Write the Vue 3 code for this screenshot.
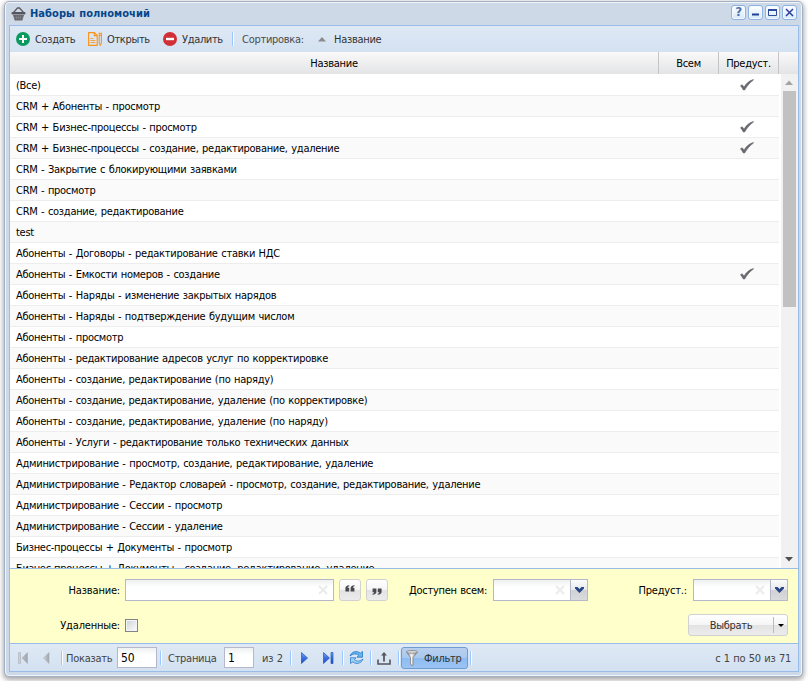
<script setup>
const rows = [
  ['(Все)', true],
  ['CRM + Абоненты - просмотр', false],
  ['CRM + Бизнес-процессы - просмотр', true],
  ['CRM + Бизнес-процессы - создание, редактирование, удаление', true],
  ['CRM - Закрытие с блокирующими заявками', false],
  ['CRM - просмотр', false],
  ['CRM - создание, редактирование', false],
  ['test', false],
  ['Абоненты - Договоры - редактирование ставки НДС', false],
  ['Абоненты - Емкости номеров - создание', true],
  ['Абоненты - Наряды - изменение закрытых нарядов', false],
  ['Абоненты - Наряды - подтверждение будущим числом', false],
  ['Абоненты - просмотр', false],
  ['Абоненты - редактирование адресов услуг по корректировке', false],
  ['Абоненты - создание, редактирование (по наряду)', false],
  ['Абоненты - создание, редактирование, удаление (по корректировке)', false],
  ['Абоненты - создание, редактирование, удаление (по наряду)', false],
  ['Абоненты - Услуги - редактирование только технических данных', false],
  ['Администрирование - просмотр, создание, редактирование, удаление', false],
  ['Администрирование - Редактор словарей - просмотр, создание, редактирование, удаление', false],
  ['Администрирование - Сессии - просмотр', false],
  ['Администрирование - Сессии - удаление', false],
  ['Бизнес-процессы + Документы - просмотр', false],
  ['Бизнес-процессы + Документы - создание, редактирование, удаление', false],
]
</script>

<template>
  <div class="page">
    <div class="window">
      <header class="title">
        <svg class="basket" width="15" height="14" viewBox="0 0 15 14">
          <path d="M2.500 5.500 6.500 1h2L12.500 5.500" fill="none" stroke="#5c5c62" stroke-width="1.300" />
          <rect x=".5" y="5" width="14" height="2.400" rx="1" fill="#55555b" />
          <path d="M2 8h11l-1.700 5.500H3.700z" fill="#66666c" />
          <path d="M5.500 8.500v4M7.500 8.500v4M9.500 8.500v4M3.400 10.500h8.200" stroke="#85858d" stroke-width=".6" />
        </svg>
        <h1>Наборы полномочий</h1>
        <div class="tools">
          <span class="tool q">?</span>
          <span class="tool"><svg width="13" height="13"><path d="M3 8.500h7" stroke="#1f4193" stroke-width="2" /></svg></span>
          <span class="tool"><svg width="13" height="13"><path d="M2.500 3v6.500h8V3" fill="none" stroke="#2b4c9b" /><path d="M2 4h9" stroke="#2b4c9b" stroke-width="2" /></svg></span>
          <span class="tool"><svg width="13" height="13"><path d="m3 3 7 7M10 3l-7 7" stroke="#2b3f98" stroke-width="1.500" /></svg></span>
        </div>
      </header>

      <main class="body">
        <div class="topbar">
          <div class="act a1">
            <svg width="14" height="14"><circle cx="7" cy="7" r="7" fill="#0a9a5e" /><path d="M3 7h8M7 3v8" stroke="#fff" stroke-width="2" /></svg>
            <span>Создать</span>
          </div>
          <div class="act a2">
            <svg width="14" height="14" fill="none" stroke="#f7941d" stroke-width="1.100">
              <path d="M.6.6h5.800l2.800 2.800v10H.6zM6.300.8v2.800h2.700" /><path d="M2.400 6.500h3M2.400 8.500h5M2.400 10.500h5" stroke-width=".8" /><path d="M11.200 1.200h2.200v10l-1.100 2-1.100-2zM11.200 3.200h2.200" />
            </svg>
            <span>Открыть</span>
          </div>
          <div class="act a3">
            <svg width="14" height="14"><circle cx="7" cy="7" r="7" fill="#d03035" /><path d="M3 7h8" stroke="#fff" stroke-width="2.400" /></svg>
            <span>Удалить</span>
          </div>
          <i class="sep"></i>
          <span class="sortlabel">Сортировка:</span>
          <svg class="sortarrow" width="8" height="5"><path d="M0 4.500 4 0l4 4.500z" fill="#8b8b8b" /></svg>
          <span class="sortname">Название</span>
        </div>

        <div class="heads">
          <span>Название</span><span>Всем</span><span>Предуст.</span><span></span>
        </div>

        <div class="grid">
          <div class="rows">
            <div v-for="(r, i) in rows" :key="i" class="row" :class="{ alt: i % 2 }">
              <span class="name">{{ r[0] }}</span>
              <span class="check">
                <svg v-if="r[1]" width="14" height="12"><path d="M.5 6.700 2 5.800c.9.5 1.500 1.300 2 2.400C6 4.700 9.300 1.600 13.300.6L13.500 1C9.800 3.600 7 7 4.700 11H3.300C2.400 9.300 1.500 7.800.5 6.700z" fill="#68686f" stroke="#68686f" stroke-width=".6" /></svg>
              </span>
            </div>
          </div>
          <div class="scroll">
            <svg width="16" height="16"><path d="M4 11 8 6.500l4 4.500z" fill="#a3a3a3" /></svg>
            <div class="thumb"></div>
            <svg width="16" height="16"><path d="m4 5 4 4.500L12 5z" fill="#505050" /></svg>
          </div>
        </div>

        <section class="filter">
          <div class="line">
            <label class="l1">Название:</label>
            <div class="field f1"><svg class="clear" width="10" height="10"><path d="m1 1 8 8M9 1 1 9" /></svg></div>
            <button class="quote b1"><svg width="10" height="7"><path d="M4.300.2v1C3.200 1.500 2.700 2 2.700 2.800h1.500V6.500H.4V3.200C.4 1.500 1.700.4 4.300.2zM9.500.2v1C8.400 1.500 7.900 2 7.900 2.800h1.500V6.500H5.600V3.200C5.600 1.500 6.900.4 9.500.2z" fill="#484850" /></svg></button>
            <button class="quote b2"><svg width="10" height="7"><path d="M.5 6.800v-1C1.600 5.500 2.100 5 2.100 4.200H.6V.5h3.800v3.300C4.400 5.500 3.100 6.600.5 6.800zM5.700 6.800v-1C6.800 5.500 7.300 5 7.300 4.200H5.800V.5h3.800v3.300C9.600 5.500 8.300 6.600 5.700 6.800z" fill="#484850" /></svg></button>
            <label class="l2">Доступен всем:</label>
            <div class="field combo"><svg class="clear" width="10" height="10"><path d="m1 1 8 8M9 1 1 9" /></svg><span class="trigger"><svg width="9" height="6"><path d="M0 0h2.500l2 2L6.500 0H9v1.500L4.500 6 0 1.500z" fill="#2b4687" /></svg></span></div>
            <label class="l3">Предуст.:</label>
            <div class="field combo"><svg class="clear" width="10" height="10"><path d="m1 1 8 8M9 1 1 9" /></svg><span class="trigger"><svg width="9" height="6"><path d="M0 0h2.500l2 2L6.500 0H9v1.500L4.500 6 0 1.500z" fill="#2b4687" /></svg></span></div>
          </div>
          <div class="line second">
            <label class="l1">Удаленные:</label>
            <span class="box"></span>
            <button class="choose"><span>Выбрать</span><i><svg width="6" height="3"><path d="M0 0h6L3 3z" fill="#000" /></svg></i></button>
          </div>
        </section>

        <footer class="pager">
          <svg class="first" width="11" height="12"><defs><linearGradient id="gr"><stop stop-color="#d2d6dc" /><stop offset="1" stop-color="#9da3ab" /></linearGradient><linearGradient id="bl" x2="0" y2="1"><stop stop-color="#76a4f5" /><stop offset=".5" stop-color="#3b6fe0" /><stop offset="1" stop-color="#1c4cbd" /></linearGradient></defs><path d="M.5.5h2v11h-2zM9.500.5v11L4 6z" fill="url(#gr)" stroke="#a9afb8" stroke-width=".6" /></svg>
          <svg class="prev" width="7" height="12"><path d="M6 .5v11L.5 6z" fill="url(#gr)" stroke="#a9afb8" stroke-width=".6" /></svg>
          <i class="sep s1"></i>
          <span class="t show">Показать</span>
          <div class="num n1">50</div>
          <i class="sep s2"></i>
          <span class="t pg">Страница</span>
          <div class="num n2">1</div>
          <span class="t of">из 2</span>
          <i class="sep s3"></i>
          <svg class="next" width="7" height="12"><path d="M.5.5v11L6.500 6z" fill="url(#bl)" stroke="#2454bd" stroke-width=".7" /></svg>
          <svg class="last" width="11" height="12"><path d="M.5.5v11L6.500 6zM8 .5h2v11H8z" fill="url(#bl)" stroke="#2454bd" stroke-width=".7" /></svg>
          <i class="sep s4"></i>
          <svg class="refresh" width="15" height="15" viewBox="0 0 15 15">
            <path d="M1 6C2.500 1.500 8 .2 11.200 3.200L13.500 1.500v5.700H8L9.600 5.300C7 3.300 4.500 3.500 1 6z" fill="#63b5ef" stroke="#2878c8" stroke-width=".8" />
            <path d="M14 9C12.500 13.500 7 14.800 3.800 11.800L1.500 13.500V7.800H7L5.400 9.700C8 11.700 10.500 11.500 14 9z" fill="#9bd3f7" stroke="#2878c8" stroke-width=".8" />
          </svg>
          <i class="sep s5"></i>
          <svg class="up" width="14" height="14"><path d="M1 8.500V13h12V8.500" fill="none" stroke="#55555e" stroke-width="1.600" /><path d="M7 10.500V3" stroke="#55555e" stroke-width="1.800" /><path d="M4 4.500 7 1l3 3.500z" fill="#55555e" /></svg>
          <i class="sep s6"></i>
          <button class="fbtn">
            <svg width="12" height="16"><defs><linearGradient id="fn"><stop stop-color="#777" /><stop offset=".45" stop-color="#f6f6f6" /><stop offset="1" stop-color="#777" /></linearGradient></defs><path d="M.5 2 4.500 7.500v7l2.500 1v-8L11.500 2z" fill="url(#fn)" stroke="#777" stroke-width=".7" /><ellipse cx="6" cy="1.900" rx="5.500" ry="1.400" fill="#ddd" stroke="#777" stroke-width=".7" /></svg>
            <span>Фильтр</span>
          </button>
          <i class="sep s7"></i>
          <span class="t total">с 1 по 50 из 71</span>
        </footer>
      </main>
    </div>
  </div>
</template>

<style>
body { background: #fff; }
</style>

<style scoped>
* { box-sizing: border-box; }
.page { width: 808px; height: 681px; padding: 1px 5px 4px 4px; overflow: hidden; font: 11px/14px "DejaVu Sans Condensed", "DejaVu Sans", sans-serif; font-stretch: condensed; letter-spacing: -.28px; word-spacing: .7px; color: #000; white-space: nowrap; }
.window { width: 799px; height: 676px; border: 1px solid #a2b1c5; border-radius: 5px; background: #ced9e7; box-shadow: inset 0 0 0 1px #f1f5fa, 0 2px 5px 1px #aaa; padding: 0 4px 4px; }
.title { height: 23px; display: flex; align-items: center; padding: 0 1px 0 2px; }
.basket { margin-right: 4px; }
h1 { margin: 0; font-size: 11px; line-height: 14px; color: #04468c; letter-spacing: .06px; }
.tools { display: flex; gap: 2px; margin: 0 0 2px auto; }
.tool { width: 15px; height: 15px; border: 1px solid #8db2e3; border-radius: 3px; background: linear-gradient(#fff, #d5e7fd); box-shadow: inset 0 0 0 1px #f4f9ff; display: flex; }
.tool.q { justify-content: center; font: bold 12px/13px "DejaVu Sans", sans-serif; color: #4976ad; }
.body { width: 790px; height: 647px; border: 1px solid #99bce8; display: flex; flex-direction: column; }
.topbar { height: 26px; background: linear-gradient(#dfe9f5, #d3e1f1); display: flex; align-items: center; padding-left: 6px; color: #333; }
.topbar span { padding-top: 2px; }
.act { display: flex; align-items: center; gap: 5px; }
.act span { letter-spacing: -.35px; }
.a1 { width: 72px; }
.a2 { width: 75px; }
.a3 { width: 69px; }
.sep { flex: none; width: 2px; height: 14px; background: linear-gradient(90deg, #98c8ff 50%, #fff 50%); }
.sortlabel { width: 76px; margin-left: 8px; color: #4c4c4c; }
.sortarrow { margin-right: 8px; }
.heads { height: 22px; display: grid; grid-template-columns: 649px 60px 60px 19px; background: linear-gradient(#f9f9f9, #e3e4e6); line-height: 23px; text-align: center; }
.heads span { border-right: 1px solid #c5c5c5; }
.heads span:last-child { border: 0; }
.grid { height: 494px; overflow: hidden; display: flex; justify-content: space-between; background: #fff; }
.rows { width: 769px; padding-top: 1px; }
.row { height: 21px; display: flex; justify-content: space-between; padding: 0 25px 0 6px; border-bottom: 1px solid #ededed; line-height: 22px; }
.alt { background: #fafafa; }
.check { width: 14px; height: 20px; display: flex; align-items: center; }
.scroll { width: 17px; background: #f1f1f1; display: flex; flex-direction: column; }
.scroll svg { flex: none; }
.thumb { width: 13px; height: 216px; margin: 1px 0 auto 2px; background: #c1c1c1; }
.filter { height: 76px; background: #ffc; border: solid #99bce8; border-width: 1px 0; padding-top: 10px; }
.line { height: 22px; display: flex; align-items: center; }
.second { margin-top: 13px; }
label { text-align: right; padding-top: 2px; letter-spacing: -.18px; }
.l1 { width: 110px; margin-right: 5px; }
.l2 { width: 99px; margin-right: 6px; letter-spacing: -.28px; }
.l3 { width: 99px; margin-right: 6px; }
.field { height: 22px; border: 1px solid #b5b8c8; background: linear-gradient(#eef1f1, #fff 7px); display: flex; align-items: center; justify-content: flex-end; }
.f1 { width: 209px; padding-right: 5px; }
.combo { width: 95px; }
.clear { fill: none; stroke: #ebebeb; stroke-width: 2; }
.trigger { width: 17px; height: 20px; margin-left: 5px; border-left: 1px solid #b5b8c8; background: linear-gradient(#fbfbfb, #e8e9eb 50%, #d0d1d5 50%, #dadbdd); display: flex; align-items: center; justify-content: center; }
button { font: inherit; letter-spacing: inherit; padding: 0; color: #333; border: 1px solid #d1d1d1; border-radius: 3px; background: linear-gradient(#fff, #f5f5f5 48%, #e3e3e3 52%, #ececec); display: flex; align-items: center; justify-content: center; height: 22px; }
.quote { width: 22px; margin-left: 5px; }
.b1 { padding-bottom: 3px; }
.b2 { padding-top: 3px; }
.box { width: 13px; height: 13px; border: 1px solid #848484; background: linear-gradient(135deg, #ccd0d5, #fff); background-clip: padding-box; box-shadow: inset 0 0 0 1px #f4f4f4; }
.choose { width: 100px; margin-left: 550px; }
.choose span { width: 84px; padding-top: 2px; text-align: center; }
.choose i { width: 14px; height: 16px; border-left: 1px solid #bbb; display: flex; align-items: center; justify-content: center; }
.pager { height: 27px; background: linear-gradient(#dfe9f5, #d3e1f1); display: flex; align-items: center; padding: 0 7px 0 8px; color: #444; }
.pager > * { flex: none; }
.t { padding-top: 2px; }
.prev { margin-left: 14px; }
.s1 { margin: 0 3px 0 11px; }
.show { width: 51px; }
.num { height: 21px; border: 1px solid #b5b8c8; background: linear-gradient(#eef1f1, #fff 7px); padding-left: 3px; font-size: 12px; line-height: 21px; color: #000; letter-spacing: 0; }
.n1 { width: 40px; }
.s2 { margin: 0 6px 0 3px; }
.pg { width: 56px; }
.n2 { width: 30px; }
.of { width: 28px; margin-left: 8px; }
.next { margin-left: 9px; }
.last { margin-left: 15px; }
.s4 { margin: 0 5px 0 8px; }
.s5 { margin: 0 5px 0 6px; }
.s6 { margin: 0 1px 0 7px; }
.fbtn { width: 67px; justify-content: flex-start; padding-left: 4px; border-color: #6f9cd0; background: linear-gradient(#bad0ee, #a9c8ef 49%, #8dbcf2 51%, #9bc4f3); }
.fbtn span { margin-left: 6px; padding-top: 2px; }
.s7 { margin-left: 2px; }
.total { margin-left: auto; letter-spacing: -.3px; }
</style>
